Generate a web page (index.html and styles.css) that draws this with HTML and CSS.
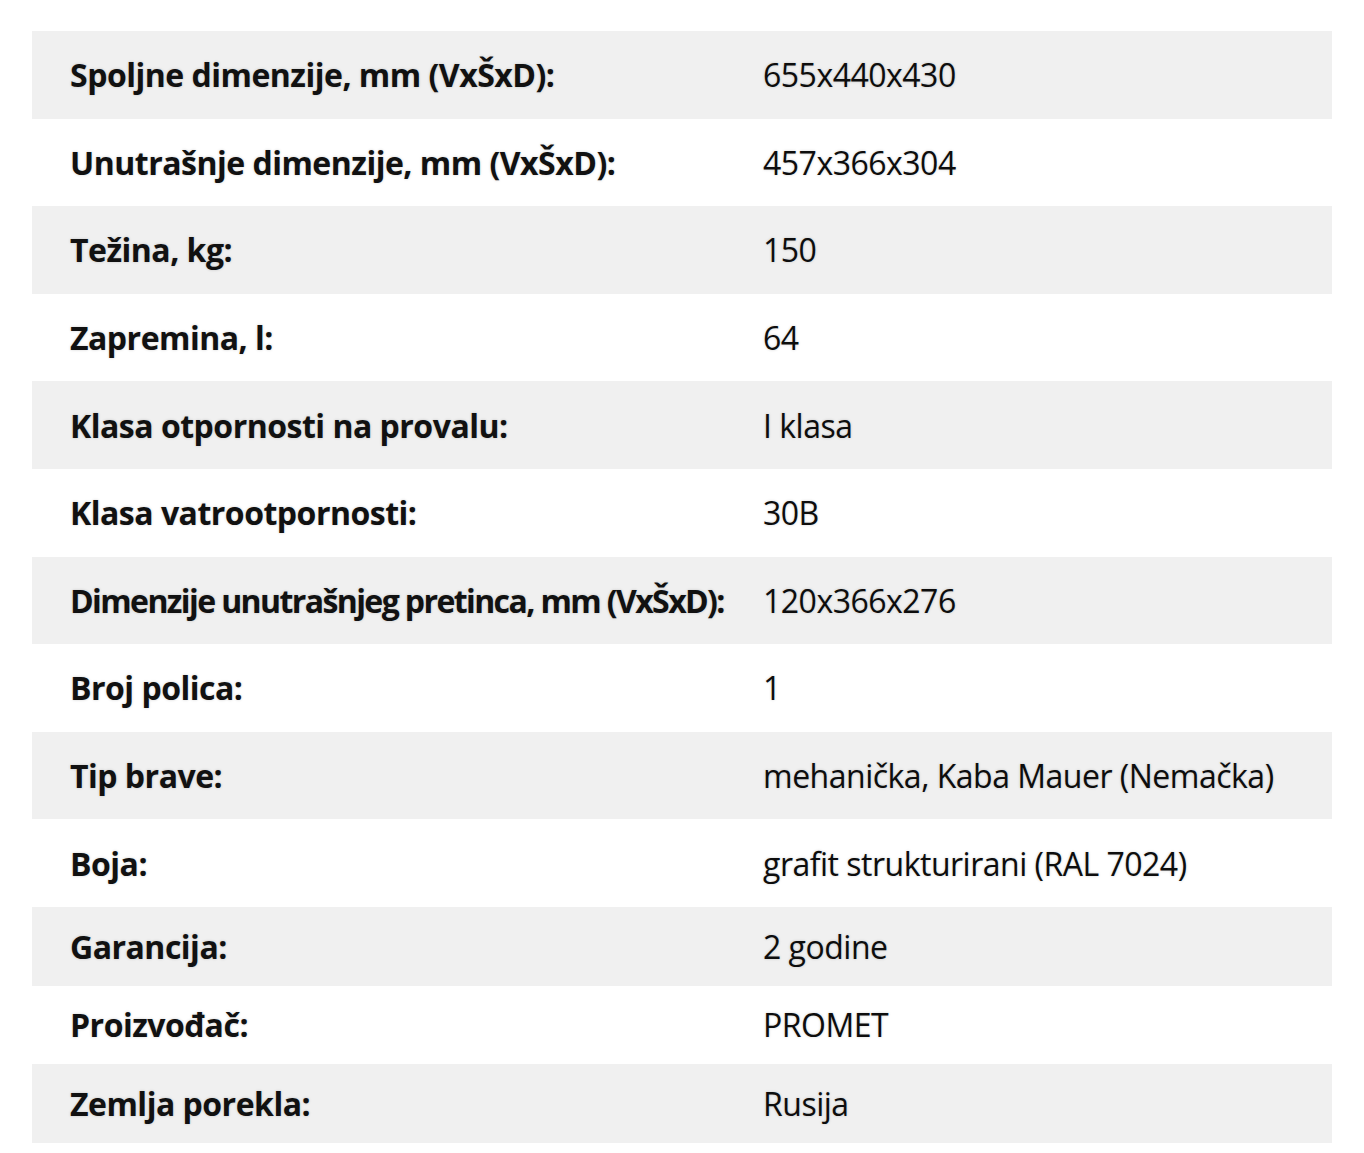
FILE: index.html
```html
<!DOCTYPE html>
<html lang="sr">
<head>
    <meta charset="UTF-8">
    <meta name="viewport" content="width=device-width, initial-scale=1.0">
    <title>Specifikacija sefa</title>
    <link rel="stylesheet" href="styles.css">
</head>
<body>
    <table class="specs">
        <colgroup>
            <col class="col-label">
            <col class="col-value">
        </colgroup>
        <tr><td class="label">Spoljne dimenzije, mm (VxŠxD):</td><td class="value">655x440x430</td></tr>
        <tr><td class="label">Unutrašnje dimenzije, mm (VxŠxD):</td><td class="value">457x366x304</td></tr>
        <tr><td class="label">Težina, kg:</td><td class="value">150</td></tr>
        <tr><td class="label">Zapremina, l:</td><td class="value">64</td></tr>
        <tr><td class="label">Klasa otpornosti na provalu:</td><td class="value">I klasa</td></tr>
        <tr><td class="label">Klasa vatrootpornosti:</td><td class="value">30B</td></tr>
        <tr><td class="label label-long">Dimenzije unutrašnjeg pretinca, mm (VxŠxD):</td><td class="value">120x366x276</td></tr>
        <tr><td class="label">Broj polica:</td><td class="value">1</td></tr>
        <tr><td class="label">Tip brave:</td><td class="value">mehanička, Kaba Mauer (Nemačka)</td></tr>
        <tr><td class="label">Boja:</td><td class="value">grafit strukturirani (RAL 7024)</td></tr>
        <tr class="short"><td class="label">Garancija:</td><td class="value">2 godine</td></tr>
        <tr class="short"><td class="label">Proizvođač:</td><td class="value">PROMET</td></tr>
        <tr class="short"><td class="label">Zemlja porekla:</td><td class="value">Rusija</td></tr>
    </table>
</body>
</html>
```

FILE: styles.css
```css
body {
    margin: 0;
    padding: 31px 32px;
    background-color: #fff;
    font-family: "Open Sans", "Noto Sans", sans-serif;
    color: #111;
}
.specs {
    width: 1300px;
    border-collapse: collapse;
    table-layout: fixed;
}
.col-label {
    width: 693px;
}
.specs tr {
    height: 87.6px;
}
.specs tr.short {
    height: 78.7px;
}
.specs tr:nth-child(odd) {
    background-color: #f0f0f0;
}
.specs td {
    padding: 0 0 0 38px;
    vertical-align: middle;
    font-size: 32px;
    letter-spacing: -0.5px;
    text-shadow: 0 0 3px rgba(0, 0, 0, 0.18);
    white-space: nowrap;
}
.specs .label {
    font-weight: 700;
}
.specs .label-long {
    letter-spacing: -1.6px;
}
.specs .value {
    font-weight: 400;
    color: #0d0d0d;
}
```
